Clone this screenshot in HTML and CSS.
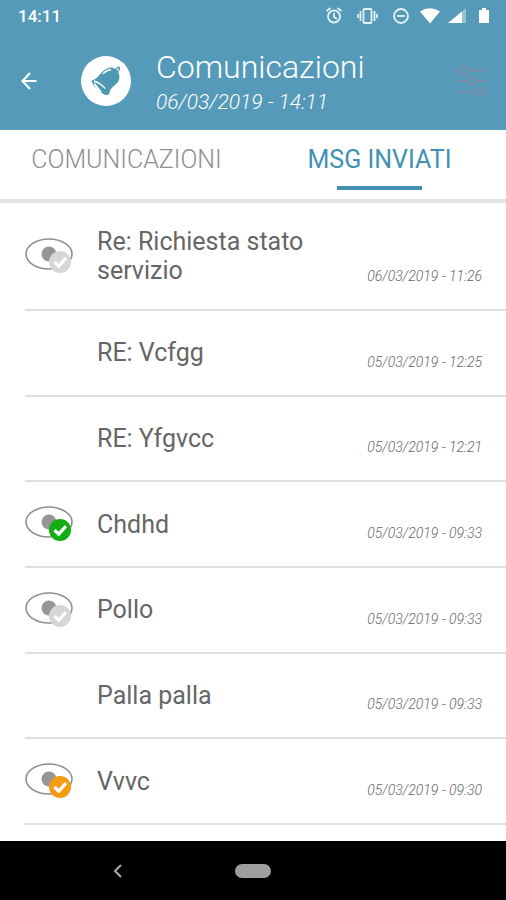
FILE: index.html
```html
<!DOCTYPE html>
<html lang="it">
<head>
  <meta charset="UTF-8">
  <meta name="viewport" content="width=device-width, initial-scale=1">
  <title>Comunicazioni</title>
  <link rel="stylesheet" href="styles.css">
</head>
<body>
  <!-- shared icons -->
  <svg class="sprite" aria-hidden="true">
    <symbol id="eye" viewBox="0 0 48 36">
      <ellipse cx="24" cy="16" rx="23" ry="15" fill="#fff" stroke="#8e8e8e" stroke-width="1.6"/>
      <circle cx="24" cy="16" r="7.5" fill="#959595"/>
      <circle cx="35" cy="24" r="11" fill="currentColor"/>
      <path d="M29.5 24l4.2 4.2 7.3-8" fill="none" stroke="#fff" stroke-width="3.2"/>
    </symbol>
  </svg>

  <header class="top">
    <div class="status-bar">
      <span class="clock">14:11</span>
      <svg width="166" height="20" viewBox="0 0 166 20" fill="none" stroke="#e4f2f8" stroke-width="1.8" aria-hidden="true">
        <circle cx="10" cy="10.500" r="6"/>
        <path d="M10 7v4l3 2M2.500 5l4-3M17.500 5l-4-3"/>
        <rect x="39.500" y="3" width="8" height="14" rx="1"/>
        <path d="M36.500 5v10M50.500 5v10M34 8v4M53 8v4"/>
        <circle cx="77" cy="10" r="7"/>
        <path d="M73 10h8"/>
        <g fill="#fff" stroke="none">
          <path d="M96 5.500Q106 -1 116 5.500L106 17.500z"/>
          <path d="M142 2v15h-17z" opacity=".4"/>
          <path d="M138 5.500v11.500h-14z"/>
          <path d="M155 4h3V2h4v2h3v13h-10z"/>
        </g>
      </svg>
    </div>
    <div class="app-bar">
      <button class="icon-btn" type="button" aria-label="Indietro">
        <svg width="18" height="20" viewBox="0 0 18 20" fill="none" stroke="#fff" stroke-width="2.2"><path d="M16.500 10H3M10 2L2.500 10l7.500 8"/></svg>
      </button>
      <span class="logo">
        <svg width="50" height="50" viewBox="0 0 50 50" aria-hidden="true">
          <circle cx="25" cy="25" r="25" fill="#fff"/>
          <path d="M10.500 24.500c7-1 9-10 17-12.500 3-1 5 0 6.500 1l3-2.500c2 0 3 2 1.500 3.500l-1.500 2c3 5 1 10-3 13-4 3-5.500 6-6 9.500l-3 .5C19 37 12.500 31 10.500 24.500z" fill="#4f98b5"/>
          <path d="M13 26l8 10-2 .5c-3-2-6-6-6-10.500zM22 18c2-3 5-5 9-5.500" fill="#fff"/>
          <path d="M22 18c2-3 5-4 8-4M13 25c4 1 10 5 13 10" fill="none" stroke="#fff" stroke-width="1.300"/>
          <circle cx="24.500" cy="35.500" r="3" fill="#4f98b5"/>
          <circle cx="36.700" cy="13.200" r="1" fill="#fff"/>
        </svg>
      </span>
      <div class="heading">
        <h1>Comunicazioni</h1>
        <p>06/03/2019 - 14:11</p>
      </div>
      <button class="icon-btn" type="button" aria-label="Filtri">
        <svg width="32" height="32" viewBox="0 0 32 32" fill="none" stroke="#8885a0" stroke-width="1.500">
          <path d="M0 5.500h4M12 5.500h19M0 16h12M20 16h12M0 26.500h20M28 26.500h4"/>
          <circle cx="8" cy="5.500" r="4"/><circle cx="16" cy="16" r="4"/><circle cx="24" cy="26.500" r="4"/>
        </svg>
      </button>
    </div>
  </header>

  <nav class="tabs">
    <button class="tab" type="button">COMUNICAZIONI</button>
    <button class="tab active" type="button">MSG INVIATI</button>
  </nav>

  <main>
    <ul class="messages">
      <li class="message tall">
        <svg class="eye"><use href="#eye"/></svg>
        <h2>Re: Richiesta stato servizio</h2>
        <time>06/03/2019 - 11:26</time>
      </li>
      <li class="message">
        <span class="eye"></span>
        <h2>RE: Vcfgg</h2>
        <time>05/03/2019 - 12:25</time>
      </li>
      <li class="message">
        <span class="eye"></span>
        <h2>RE: Yfgvcc</h2>
        <time>05/03/2019 - 12:21</time>
      </li>
      <li class="message">
        <svg class="eye green"><use href="#eye"/></svg>
        <h2>Chdhd</h2>
        <time>05/03/2019 - 09:33</time>
      </li>
      <li class="message">
        <svg class="eye"><use href="#eye"/></svg>
        <h2>Pollo</h2>
        <time>05/03/2019 - 09:33</time>
      </li>
      <li class="message">
        <span class="eye"></span>
        <h2>Palla palla</h2>
        <time>05/03/2019 - 09:33</time>
      </li>
      <li class="message">
        <svg class="eye orange"><use href="#eye"/></svg>
        <h2>Vvvc</h2>
        <time>05/03/2019 - 09:30</time>
      </li>
    </ul>
  </main>

  <footer class="system-nav">
    <button class="icon-btn" type="button" aria-label="Indietro">
      <svg width="10" height="14" viewBox="0 0 10 14" fill="none" stroke="#aaa" stroke-width="2"><path d="M8 1L2 7l6 6"/></svg>
    </button>
    <button class="home" type="button" aria-label="Home"></button>
  </footer>
</body>
</html>
```
FILE: styles.css
```css
* {
  box-sizing: border-box;
}

body {
  margin: 0;
  min-height: 100vh;
  display: flex;
  flex-direction: column;
  font-family: Roboto, "Liberation Sans", sans-serif;
  background-color: #fff;
  color: #666;
}

h1, h2, p, ul {
  margin: 0;
  padding: 0;
  font-weight: 300;
}

button {
  padding: 0;
  border: none;
  background: none;
  font-family: inherit;
}

svg {
  display: block;
}

.sprite {
  display: none;
}

.top {
  background-color: #559ab8;
  color: #fff;
}

.status-bar {
  display: flex;
  justify-content: space-between;
  align-items: center;
  height: 32px;
  padding: 0 16px 0 18px;
}

.clock {
  font-size: 17px;
  font-weight: 500;
}

.app-bar {
  display: flex;
  align-items: center;
  height: 98px;
  padding: 0 18px 0 20px;
}

.logo {
  margin: 0 25px 0 43px;
}

.heading {
  flex: 1;
  padding-top: 4px;
}

.heading h1 {
  font-size: 32px;
  line-height: 38px;
}

.heading p {
  font-size: 21px;
  line-height: 32px;
  font-style: italic;
}

.tabs {
  display: grid;
  grid-template-columns: 1fr 1fr;
  height: 73px;
  border-bottom: 4px solid #e2e2e2;
}

.tab {
  display: flex;
  flex-direction: column;
  align-items: center;
  justify-content: center;
  padding-top: 6px;
  font-size: 25px;
  font-weight: 300;
  color: #8f8f94;
}

.tab::after {
  content: "";
  width: 85px;
  height: 4px;
  margin-top: 12px;
}

.tab.active {
  font-weight: 400;
  color: #4390b2;
}

.tab.active::after {
  background-color: #4390b2;
}

main {
  flex: 1;
  display: flex;
  padding: 0 0 16px 25px;
}

.messages {
  flex: 1;
  display: flex;
  flex-direction: column;
  list-style: none;
}

.message {
  flex: 1 0 84px;
  display: flex;
  align-items: center;
  padding-right: 24px;
  border-bottom: 2px solid #e0e0e0;
}

.message.tall {
  flex: none;
  padding: 24px 24px 24px 0;
}

.message h2 {
  flex: 1;
  padding-right: 30px;
  font-size: 25px;
  font-weight: 400;
  line-height: 29px;
}

.message time {
  align-self: flex-end;
  padding-bottom: 24px;
  font-size: 14px;
  font-style: italic;
  line-height: 18px;
}

.message.tall time {
  padding-bottom: 0;
}

.eye {
  width: 48px;
  height: 36px;
  margin-right: 24px;
  color: #d6d6d6;
}

.eye.green {
  color: #12ad12;
}

.eye.orange {
  color: #f39c12;
}

.system-nav {
  display: grid;
  grid-template-columns: 1fr 36px 1fr;
  align-items: center;
  height: 59px;
  background-color: #000;
}

.system-nav .icon-btn {
  justify-self: center;
}

.home {
  height: 14px;
  border-radius: 7px;
  background-color: #9e9e9e;
}
```
